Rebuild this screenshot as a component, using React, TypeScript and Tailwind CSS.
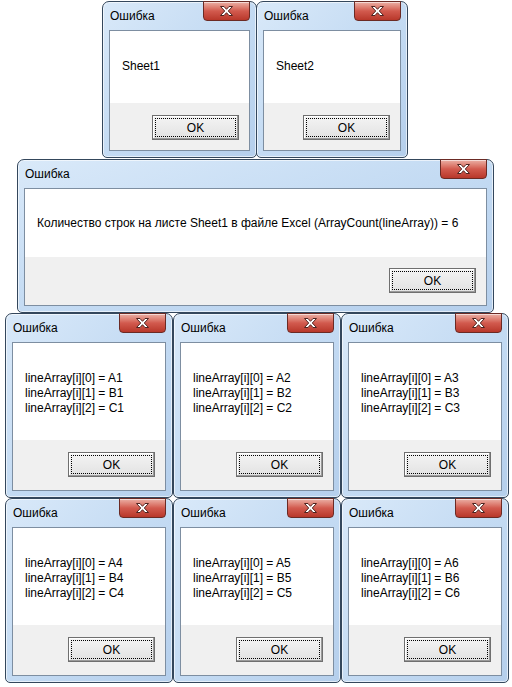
import React from 'react';

interface MsgBoxProps {
    size: string;
    lines: string[];
    bodyClass: string;
    footClass: string;
}

const CloseButton: React.FC = () => (
    <div className="absolute right-0 top-[-1px] flex h-[20px] w-[47px] items-center justify-center rounded-b-[4px] border border-[#6b2a24] bg-gradient-to-b from-[#eab0a6] via-[#d25a4e] to-[#b8372a] shadow-[inset_0_1px_0_rgba(255,255,255,0.55)]">
        <svg width="15" height="12" viewBox="0 0 15 12">
            <path
                d="M1.5 1.5h3.5l2.5 2.8 2.5-2.8h3.5l-4.2 4.5 4.2 4.5h-3.5l-2.5-2.8-2.5 2.8h-3.5l4.2-4.5z"
                fill="#fff"
                stroke="#4f2420"
                strokeWidth="1"
                strokeLinejoin="round"
            />
        </svg>
    </div>
);

const MsgBox: React.FC<MsgBoxProps> = ({ size, lines, bodyClass, footClass }) => {
    return (
        <div
            className={`${size} flex flex-col rounded-t-[7px] rounded-b-[5px] border border-[#34475c] bg-gradient-to-br from-[#d9e9f9] via-[#c4dbf3] to-[#b5cfec] px-[6px] pb-[6px] shadow-[inset_0_0_0_1px_rgba(255,255,255,0.6)]`}
        >
            <div className="relative h-[28px] shrink-0">
                <span className="absolute left-[1px] top-[7px] text-[12px] leading-[14px] text-black">Ошибка</span>
                <CloseButton />
            </div>
            <div className="flex flex-1 flex-col border border-[#7d8ea1] bg-white">
                <div className={`flex-1 ${bodyClass}`}>
                    {lines.map((line) => (
                        <div key={line} className="text-[12px] leading-[15px] text-black whitespace-nowrap">
                            {line}
                        </div>
                    ))}
                </div>
                <div className={`flex justify-end bg-[#f0f0f0] pr-[10px] ${footClass}`}>
                    <button className="flex h-[25px] w-[87px] items-center justify-center border border-[#6f6f6f] bg-gradient-to-b from-[#f4f4f4] to-[#e2e2e2] p-[2px] shadow-[inset_-1px_-1px_0_#9a9a9a,inset_1px_1px_0_#ffffff]">
                        <span className="flex h-full w-full items-center justify-center border border-dotted border-black text-[12px] leading-none text-black">
                            OK
                        </span>
                    </button>
                </div>
            </div>
        </div>
    );
};

const App: React.FC = () => {
    const grid = [1, 2, 3, 4, 5, 6];
    return (
        <div
            className="relative h-[687px] w-[512px] overflow-hidden bg-white"
            style={{ fontFamily: '"Liberation Sans", Arial, sans-serif' }}
        >
            <div className="flex pl-[102px] pt-[1px]">
                <MsgBox size="w-[155px] h-[157px]" lines={['Sheet1']} bodyClass="pl-[12px] pt-[28px]" footClass="h-[47px] pt-[12px]" />
                <MsgBox size="-ml-px w-[152px] h-[157px]" lines={['Sheet2']} bodyClass="pl-[12px] pt-[28px]" footClass="h-[47px] pt-[12px]" />
            </div>
            <div className="mt-[1px] pl-[17px]">
                <MsgBox
                    size="w-[477px] h-[154px]"
                    lines={['Количество строк на листе Sheet1 в файле Excel (ArrayCount(lineArray)) = 6']}
                    bodyClass="pl-[12px] pt-[27px]"
                    footClass="h-[48px] pt-[11px]"
                />
            </div>
            <div className="grid w-fit grid-cols-[168px_168px_168px] pl-[5px]">
                {grid.map((n) => (
                    <MsgBox
                        key={n}
                        size="h-[185px] w-[168px]"
                        lines={[
                            `lineArray[i][0] = A${n}`,
                            `lineArray[i][1] = B${n}`,
                            `lineArray[i][2] = C${n}`,
                        ]}
                        bodyClass="pl-[12px] pt-[28px]"
                        footClass="h-[50px] pt-[12px]"
                    />
                ))}
            </div>
        </div>
    );
};

export default App;
